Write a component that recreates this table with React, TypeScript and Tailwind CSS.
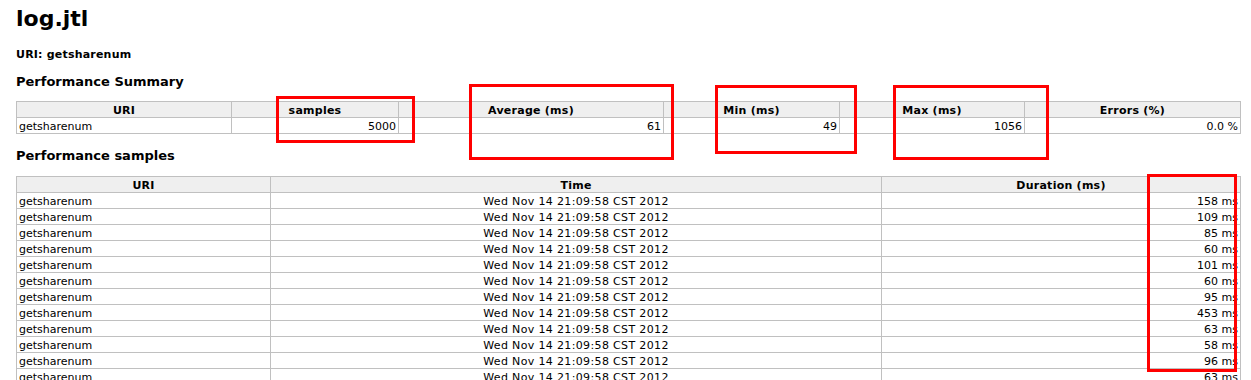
import type React from "react";

const durations = [158, 109, 85, 60, 101, 60, 95, 453, 63, 58, 96, 63];

// red annotation boxes drawn over the report
const marks = [
  { left: 276, top: 96, width: 139, height: 47 },
  { left: 469, top: 84, width: 205, height: 76 },
  { left: 715, top: 85, width: 142, height: 69 },
  { left: 893, top: 85, width: 156, height: 75 },
  { left: 1147, top: 174, width: 90, height: 198 },
];

const th = "border border-[#c0c0c0] bg-[#efefef] px-[2px] pt-[2px] pb-0 leading-[13px] font-bold text-center tracking-[0.25px]";
const td = "border border-[#c0c0c0] px-[2px] pt-[2px] pb-0 leading-[13px]";

const App: React.FC = () => {
  return (
    <div className="relative min-h-[380px] bg-white pl-4 pr-[10px] text-black font-['DejaVu_Sans',Verdana,sans-serif] text-[11px]">
      <h1 className="pt-[6px] text-[22px] leading-[26px] font-bold">log.jtl</h1>
      <p className="mt-[16px] text-[11px] leading-[13px] font-bold tracking-[0.2px]">URI: getsharenum</p>

      <h2 className="mt-[13px] text-[13px] leading-[16px] font-bold">Performance Summary</h2>
      <table className="mt-[11px] w-full table-fixed border-collapse">
        <thead>
          <tr>
            <th className={`${th} w-[215px]`}>URI</th>
            <th className={`${th} w-[167px]`}>samples</th>
            <th className={`${th} w-[265px]`}>Average (ms)</th>
            <th className={`${th} w-[176px]`}>Min (ms)</th>
            <th className={`${th} w-[185px]`}>Max (ms)</th>
            <th className={th}>Errors (%)</th>
          </tr>
        </thead>
        <tbody>
          <tr>
            <td className={td}>getsharenum</td>
            <td className={`${td} text-right`}>5000</td>
            <td className={`${td} text-right`}>61</td>
            <td className={`${td} text-right`}>49</td>
            <td className={`${td} text-right`}>1056</td>
            <td className={`${td} text-right`}>0.0 %</td>
          </tr>
        </tbody>
      </table>

      <h2 className="mt-[14px] text-[13px] leading-[16px] font-bold">Performance samples</h2>
      <table className="mt-[12px] w-full table-fixed border-collapse">
        <thead>
          <tr>
            <th className={`${th} w-[254px]`}>URI</th>
            <th className={`${th} w-[611px]`}>Time</th>
            <th className={th}>Duration (ms)</th>
          </tr>
        </thead>
        <tbody>
          {durations.map((d, i) => (
            <tr key={i}>
              <td className={td}>getsharenum</td>
              <td className={`${td} text-center tracking-[0.35px]`}>Wed Nov 14 21:09:58 CST 2012</td>
              <td className={`${td} text-right`}>{d} ms</td>
            </tr>
          ))}
        </tbody>
      </table>

      {marks.map((m, i) => (
        <div
          key={i}
          className="absolute border-[3px] border-[#ff0000] pointer-events-none"
          style={{ left: m.left, top: m.top, width: m.width, height: m.height }}
        />
      ))}
    </div>
  );
};

export default App;
